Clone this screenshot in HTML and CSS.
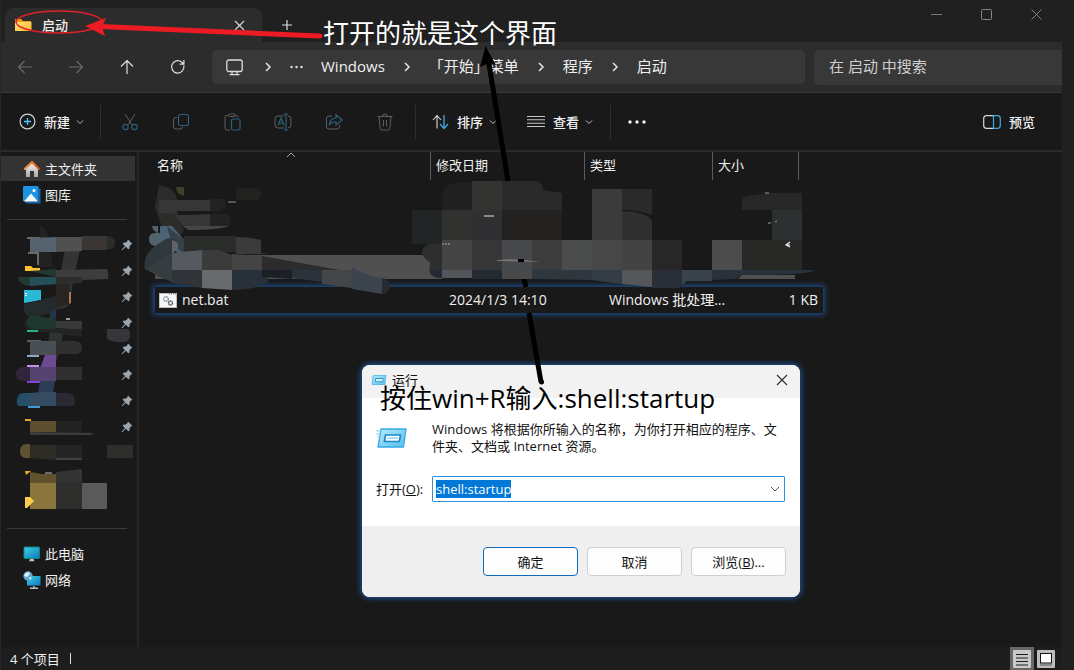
FILE: index.html
```html
<!DOCTYPE html>
<html lang="zh-CN">
<head>
<meta charset="utf-8">
<title>启动</title>
<link rel="stylesheet" href="styles.css">
</head>
<body>
<svg class="defs" width="0" height="0" aria-hidden="true">
  <defs>
    <linearGradient id="g-folder" x1="0" y1="0" x2="1" y2="1"><stop offset="0" stop-color="#ffe27e"/><stop offset="1" stop-color="#fdb92d"/></linearGradient>
    <linearGradient id="g-screen" x1="0" y1="0" x2="1" y2="1"><stop offset="0" stop-color="#37d4e0"/><stop offset="1" stop-color="#1273c4"/></linearGradient>
    <linearGradient id="g-wall" x1="0" y1="0" x2="0" y2="1"><stop offset="0" stop-color="#f2f2f2"/><stop offset="1" stop-color="#a9a9a9"/></linearGradient>
    <linearGradient id="g-roof" x1="0" y1="0" x2="1" y2="0"><stop offset="0" stop-color="#f5a35a"/><stop offset="1" stop-color="#d9520f"/></linearGradient>
    <linearGradient id="g-run" x1="0" y1="0" x2="1" y2="1"><stop offset="0" stop-color="#b5ecfb"/><stop offset="1" stop-color="#55bdee"/></linearGradient>
    <symbol id="chev-r" viewBox="0 0 8 10"><path d="M2 1l4 4-4 4" fill="none" stroke="#e4e4e4" stroke-width="1.500"/></symbol>
    <symbol id="chev-d" viewBox="0 0 8 8"><path d="M1 2.500l3 3 3-3" fill="none" stroke="#bdbdbd" stroke-width="1"/></symbol>
    <symbol id="pin" viewBox="0 0 12 12"><path d="M7 .5L11.500 5 9.800 5.600 8.600 7.200 8.400 9.700 7.300 10.200 4.800 7.800 1.200 11.300.6 10.700 4 7.100 1.700 4.800 2.300 3.700 4.800 3.500 6.300 2.300Z" fill="#9aa7b0"/></symbol>
    <symbol id="run" viewBox="0 0 32 22"><path d="M5 2H30L27.500 20H2Z" fill="url(#g-run)" stroke="#35a9e1" stroke-width="1.300" stroke-linejoin="round"/><path d="M0 4H5M0 7H4M1 10H4" stroke="#7cd0f1"/><path d="M9.500 8H24.500L23.300 14.500H8.500Z" fill="#fff" stroke="#1d86c8" stroke-width="1.700" stroke-linejoin="round"/><path d="M11.500 11H22" stroke="#8fd4f2" stroke-width="1.500"/></symbol>
  </defs>
</svg>

<div class="explorer">
  <header class="titlebar">
    <div class="tab">
      <svg width="17" height="14" viewBox="0 0 17 14"><path d="M0 1H6L8 3H16V7H0Z" fill="#f29c12"/><path d="M0 4H16.500V13H0Z" fill="url(#g-folder)"/></svg>
      <span class="tab-name">启动</span>
      <button class="plain" aria-label="关闭标签页"><svg width="11" height="11" viewBox="0 0 11 11"><path d="M1 1l9 9M10 1l-9 9" stroke="#d4d4d4" stroke-width="1.200"/></svg></button>
    </div>
    <button class="plain add" aria-label="新建标签页"><svg width="12" height="12" viewBox="0 0 12 12"><path d="M6 1v10M1 6h10" stroke="#dcdcdc" stroke-width="1.200"/></svg></button>
    <div class="win-controls">
      <button class="plain" aria-label="最小化"><svg width="11" height="11" viewBox="0 0 11 11"><path d="M0 5.500h11" stroke="#777"/></svg></button>
      <button class="plain" aria-label="最大化"><svg width="11" height="11" viewBox="0 0 11 11"><rect x=".5" y=".5" width="10" height="10" rx="1" fill="none" stroke="#858585"/></svg></button>
      <button class="plain" aria-label="关闭"><svg width="11" height="11" viewBox="0 0 11 11"><path d="M.5.5l10 10M10.500.5l-10 10" stroke="#858585"/></svg></button>
    </div>
  </header>

  <nav class="navbar">
    <div class="nav-buttons">
      <button class="plain" aria-label="后退"><svg width="16" height="16" viewBox="0 0 16 16"><path d="M15 8H2M7.500 2L1.500 8l6 6" fill="none" stroke="#6b6b6b" stroke-width="1.100"/></svg></button>
      <button class="plain" aria-label="前进"><svg width="16" height="16" viewBox="0 0 16 16"><path d="M1 8H14M8.500 2l6 6-6 6" fill="none" stroke="#6b6b6b" stroke-width="1.100"/></svg></button>
      <button class="plain" aria-label="上移"><svg width="16" height="16" viewBox="0 0 16 16"><path d="M8 15V2M2 7.500L8 1.500l6 6" fill="none" stroke="#e0e0e0" stroke-width="1.200"/></svg></button>
      <button class="plain" aria-label="刷新"><svg width="16" height="16" viewBox="0 0 16 16"><path d="M13.800 6.500A6.200 6.200 0 1 1 11.800 3.200L13.800 5M13.900 1v4.200H9.700" fill="none" stroke="#e0e0e0" stroke-width="1.200"/></svg></button>
    </div>
    <div class="address">
      <svg class="pc" width="17" height="17" viewBox="0 0 17 17"><rect x=".8" y="1" width="15.400" height="11.500" rx="2" fill="none" stroke="#ddd" stroke-width="1.300"/><path d="M6 13v2.500M11 13v2.500M3.500 15.700h10" stroke="#ddd" stroke-width="1.200"/></svg>
      <svg width="8" height="10"><use href="#chev-r"/></svg>
      <svg width="13" height="4" viewBox="0 0 13 4"><g fill="#e4e4e4"><circle cx="1.500" cy="2" r="1.200"/><circle cx="6.500" cy="2" r="1.200"/><circle cx="11.500" cy="2" r="1.200"/></g></svg>
      <a href="#">Windows</a>
      <svg width="8" height="10"><use href="#chev-r"/></svg>
      <a href="#">「开始」菜单</a>
      <svg width="8" height="10"><use href="#chev-r"/></svg>
      <a href="#">程序</a>
      <svg width="8" height="10"><use href="#chev-r"/></svg>
      <a href="#">启动</a>
    </div>
    <input class="search" type="text" placeholder="在 启动 中搜索" aria-label="搜索">
  </nav>

  <div class="toolbar">
    <button class="tool new"><svg width="17" height="17" viewBox="0 0 17 17"><circle cx="8.500" cy="8.500" r="7.400" fill="none" stroke="#d0d0d0" stroke-width="1.200"/><path d="M8.500 5v7M5 8.500h7" stroke="#4cc2ff" stroke-width="1.300"/></svg><span>新建</span><svg width="8" height="8"><use href="#chev-d"/></svg></button>
    <i class="sep"></i>
    <div class="icon-tools">
      <button class="plain" aria-label="剪切"><svg width="18" height="18" viewBox="0 0 18 18" fill="none"><path d="M4 1l7.500 11.500M14 1L6.500 12.500" stroke="#5f5f5f"/><circle cx="4.500" cy="14" r="2.700" stroke="#2d5f7c" stroke-width="1.200"/><circle cx="13.500" cy="14" r="2.700" stroke="#2d5f7c" stroke-width="1.200"/></svg></button>
      <button class="plain" aria-label="复制"><svg width="18" height="18" viewBox="0 0 18 18" fill="none"><path d="M5 4.500H4Q1.500 4.500 1.500 7v6.500Q1.500 16 4 16h4Q10.500 16 10.500 13.500" stroke="#5f5f5f"/><rect x="6.500" y="1.500" width="10" height="11" rx="2" stroke="#2d5f7c" stroke-width="1.200"/></svg></button>
      <button class="plain" aria-label="粘贴"><svg width="18" height="18" viewBox="0 0 18 18" fill="none"><path d="M5.500 2.500H4Q2 2.500 2 4.500v11Q2 17 4 17h3M12 2.500h1q2 0 2 2" stroke="#5f5f5f"/><rect x="5.500" y="1" width="6.500" height="2.500" rx="1" stroke="#5f5f5f"/><rect x="8.500" y="6" width="8.500" height="11" rx="1.500" stroke="#2d5f7c" stroke-width="1.200"/></svg></button>
      <button class="plain" aria-label="重命名"><svg width="18" height="18" viewBox="0 0 18 18" fill="none"><path d="M10 3H4Q1 3 1 6v6q0 3 3 3h6M14 3q3 0 3 3v6q0 3-3 3" stroke="#5f5f5f"/><path d="M4 12.500l3-7.500 3 7.500M5 10h4M12 1v16M10 1h4M10 17h4" stroke="#2d5f7c" stroke-width="1.200"/></svg></button>
      <button class="plain" aria-label="共享"><svg width="18" height="18" viewBox="0 0 18 18" fill="none"><path d="M7 3H4Q1.500 3 1.500 5.500v8Q1.500 16 4 16h8q2.500 0 2.500-2.500V12" stroke="#5f5f5f"/><path d="M11 1.800L17 7l-6 5V9Q7 8.500 4.500 11.500 5 5.500 11 5Z" stroke="#2d5f7c" stroke-width="1.200"/></svg></button>
      <button class="plain" aria-label="删除"><svg width="18" height="18" viewBox="0 0 18 18" fill="none"><path d="M1.500 3.500h15M6.500 3.500Q6.500 1 9 1t2.500 2.500M3 3.500l1.200 12Q4.400 17 6 17h6q1.600 0 1.800-1.500l1.200-12M7.500 7v6.500M10.500 7v6.500" stroke="#5f5f5f"/></svg></button>
    </div>
    <i class="sep"></i>
    <button class="tool sort"><svg width="17" height="16" viewBox="0 0 17 16" fill="none"><path d="M5 14.500V2M1 6l4-4.500L9 6" stroke="#ddd" stroke-width="1.100"/><path d="M12 1v13M8 10l4 4.500 4-4.500" stroke="#3fa9e5" stroke-width="1.300"/></svg><span>排序</span><svg width="8" height="8"><use href="#chev-d"/></svg></button>
    <button class="tool view"><svg width="18" height="13" viewBox="0 0 18 13"><path d="M0 1.500h18M0 4.800h18M0 8.200h18M0 11.500h18" stroke="#c4c4c4" stroke-width="1.100"/></svg><span>查看</span><svg width="8" height="8"><use href="#chev-d"/></svg></button>
    <i class="sep"></i>
    <button class="plain more" aria-label="更多"><svg width="18" height="4" viewBox="0 0 18 4"><g fill="#f2f2f2"><circle cx="2" cy="2" r="1.700"/><circle cx="9" cy="2" r="1.700"/><circle cx="16" cy="2" r="1.700"/></g></svg></button>
    <button class="tool preview"><svg width="18" height="14" viewBox="0 0 18 14" fill="none"><path d="M10 .7H3.500Q.7.700.7 3.500v7q0 2.800 2.800 2.800H10" stroke="#d8d8d8" stroke-width="1.200"/><path d="M10.500.7h4q2.800 0 2.800 2.800v7q0 2.800-2.800 2.800h-4Z" stroke="#3fa9e5" stroke-width="1.200"/></svg><span>预览</span></button>
  </div>

  <div class="body">
    <aside class="sidebar">
      <a class="side-item current" href="#"><svg width="18" height="18" viewBox="0 0 18 18"><path d="M3 8L9 3l6 5v9h-4v-6H7v6H3Z" fill="url(#g-wall)"/><path d="M1.300 9.500L9 2l7.700 7.500" fill="none" stroke="url(#g-roof)" stroke-width="2.200" stroke-linejoin="round"/></svg><span>主文件夹</span></a>
      <a class="side-item" href="#"><svg width="18" height="18" viewBox="0 0 18 18"><path d="M3 16H15.500V2.500H17.500V17.500H3Z" fill="#1c62ae"/><rect width="15.500" height="15.500" rx="1.200" fill="#1e93e4"/><path d="M1 15.500l7-8 7 8Z" fill="#f4fbff"/><circle cx="11" cy="4.500" r="1.500" fill="#fff"/></svg><span>图库</span></a>
      <hr>
      <ul class="pins">
        <li><svg width="12" height="12"><use href="#pin"/></svg></li>
        <li><svg width="12" height="12"><use href="#pin"/></svg></li>
        <li><svg width="12" height="12"><use href="#pin"/></svg></li>
        <li><svg width="12" height="12"><use href="#pin"/></svg></li>
        <li><svg width="12" height="12"><use href="#pin"/></svg></li>
        <li><svg width="12" height="12"><use href="#pin"/></svg></li>
        <li><svg width="12" height="12"><use href="#pin"/></svg></li>
        <li><svg width="12" height="12"><use href="#pin"/></svg></li>
      </ul>
      <svg class="smudge-side" width="136" height="300" viewBox="1 220 136 300" aria-hidden="true">
        <path d="M40 225q6 2 8 12l5 30H38Z" fill="#222"/>
        <path d="M65 250H80L73 280 70 303q-2 6-14 6V290L61 270Z" fill="#333534"/>
        <path d="M56 284h14v20l-14 4Z" fill="#292522"/><path d="M69 292h2v11l-2 1Z" fill="#aa7554"/>
        <path d="M27 238h13M28 253h10v12" fill="none" stroke="#7d858a" stroke-width="1.500"/>
        <path d="M30 238L56 237V252H30Z" fill="#56626d"/><path d="M56 237H82V251L56 252Z" fill="#505050"/><path d="M82 236H107V250H82Z" fill="#3a3634"/><path d="M107 236q8 0 8 7t-8 6Z" fill="#2b2d2d"/>
        <path d="M25 266h6l2 2h7v3H25Z" fill="#ffc22d"/><path d="M56 270l51-1q2 4 1 10l-52 2Z" fill="#3d3d3d"/><path d="M30 271l26-2v8H18q1 8 12 9l26-2V277Z" fill="#263832"/><path d="M30 277h26v7l-26 2Z" fill="#265059"/><path d="M56 277H82v6l-26 1Z" fill="#2d2d2d"/>
        <path d="M24 290H41V300L24 303Z" fill="#2bb9d8"/><path d="M26 293v1M26 295v1" stroke="#fff" stroke-width="2"/><path d="M24 304L56 296V312L34 317q-12 0-10-13Z" fill="#252b2d"/>
        <path d="M50 312L56 310V320L50 325Z" fill="#213549"/><path d="M66 319h4M44 319h7" stroke="#a29b91" stroke-width="2"/>
        <path d="M56 321H82V330L56 328Z" fill="#373838"/><path d="M35 317q-12 0-10 8 1 6 10 6L82 337V329H56V319Z" fill="#232525"/><path d="M30 316h10L56 320V329H32q-9-6-2-13Z" fill="#1e372f"/><path d="M27 331h11" stroke="#23ba7a" stroke-width="2"/>
        <path d="M107 329h20q3 0 3 6t-5 7q-10 1-18-3Z" fill="#343639"/>
        <path d="M50 332l13 2-4 20-6 16H43Z" fill="#313232"/><path d="M27 341H41" stroke="#99a6ad"/><path d="M30 341H56V355H30Z" fill="#4a4f54"/><path d="M56 341H74q8 0 8 7t-8 6H56Z" fill="#303030"/><path d="M27 356h12" stroke="#8fa8bf" stroke-width="2"/>
        <path d="M45 355H56V368H40Z" fill="#6d4a92"/><path d="M27 366h12" stroke="#c094e2" stroke-width="2"/><path d="M30 367v14H22q-6-1-6-7t7-7Z" fill="#30263b"/><path d="M30 367H56V381H30Z" fill="#56436f"/><path d="M56 367H82V380H56Z" fill="#303030"/><path d="M27 382h13" stroke="#8144d5" stroke-width="2"/>
        <path d="M40 381H55L53 393H38Z" fill="#2d3d58"/><path d="M30 393V406H19q-3-1-2-7t7-6Z" fill="#254f68"/><path d="M30 393l12-1h14V406H30Z" fill="#344b62"/><path d="M56 393H69q8 2 5 13H56Z" fill="#2a2a32"/><path d="M28 407h12" stroke="#4698d7" stroke-width="2"/>
        <path d="M25 420h6" stroke="#e6a822" stroke-width="2"/><path d="M30 421H56V432H30Z" fill="#5c5031"/><path d="M56 421H82V434H56Z" fill="#222"/><path d="M30 432l64 1-3 2H30Z" fill="#3b3b3b"/>
        <path d="M30 444v14H25q-5-1-5-7t6-7Z" fill="#5e5231"/><path d="M30 445H56V460L30 458Z" fill="#2d2c27"/><path d="M56 445H82V459H56Z" fill="#252525"/><path d="M56 459H82" stroke="#404040" stroke-width="2"/><path d="M107 445h26v13H107Z" fill="#2d2d2b"/>
        <path d="M25 471h6l-5 4Z" fill="#f2af22"/><path d="M30 472l12 2h14v10H30Z" fill="#5f522d"/><path d="M45 473h7" stroke="#b8bdc0"/><path d="M56 472L82 469V484H56Z" fill="#343434"/><path d="M30 483H56V509H30Z" fill="#8a753c"/><path d="M56 482H82V509H56Z" fill="#2e2e2d"/><path d="M82 483H107V509H82Z" fill="#5a5a5a"/><path d="M25 497h5l4 4-7 7h-2Z" fill="#ffcb4f"/>
      </svg>
      <hr class="lower">
      <a class="side-item" href="#"><svg width="18" height="16" viewBox="0 0 18 16"><rect x="1" y="1" width="15.500" height="11.500" rx=".7" fill="url(#g-screen)" stroke="#187"/><path d="M7 13h3.500l1 2.200H6Z" fill="#b8c3cc"/></svg><span>此电脑</span></a>
      <a class="side-item" href="#"><svg width="18" height="18" viewBox="0 0 18 18"><rect x="4" y="5" width="13.500" height="9.500" fill="url(#g-screen)"/><path d="M7 17.200h8M11 15v2" stroke="#b8c3cc" stroke-width="1.400"/><circle cx="5" cy="5" r="4.700" fill="#5aa7cf"/><path d="M2 2.500L5.500 1 7 3 4 6 1 5ZM6 6l3 .5-2 2.500Z" fill="#dfeff8"/></svg><span>网络</span></a>
    </aside>

    <main class="files">
      <svg class="sort-mark" width="10" height="6" viewBox="0 0 10 6"><path d="M1 5l4-4 4 4" fill="none" stroke="#a5a5a5"/></svg>
      <table>
        <colgroup><col><col class="c-date"><col class="c-type"><col class="c-size"><col class="c-end"></colgroup>
        <thead><tr><th>名称</th><th>修改日期</th><th>类型</th><th>大小</th><th></th></tr></thead>
        <tbody>
          <tr class="hidden-rows"><td colspan="5">
            <svg class="smudge" width="690" height="120" viewBox="140 180 690 120" aria-hidden="true">
              <path d="M155 255H442V279H155Z" fill="#505050"/>
              <path d="M159 185q15 2 18 14v16q4 10 7 15l-8 12-14-15-7-20Z" fill="#2c2d2b"/><path d="M176 187h8v9q-8-2-8-9Z" fill="#3d4128"/>
              <path d="M236 188h18q7 0 7 6t-5 6H236Z" fill="#222320"/><path d="M228 201h8v2h-8Z" fill="#555"/>
              <path d="M159 200H210V211H176l2 4q12 0 32-1v12l-26 2-10-15H159Z" fill="#363636"/><path d="M210 199h14q6 6-3 12h-11ZM210 214h16q7 3 4 12H210Z" fill="#222"/>
              <path d="M184 226h45q-10 4-41 4Z" fill="#454545"/>
              <path d="M160 226h12l12 14v18l-10-8-14-9Z" fill="#4a6375"/><path d="M152 226h6v6q-5 0-6-6M155 233q4-2 6 2v10l-6 1q-6-1-6-7t6-6Z" fill="#53636d"/><path d="M167 226l17 14v12q-12-2-17-26Z" fill="#354047"/>
              <path d="M184 236H236V252H184Z" fill="#2a2c2a"/><path d="M236 237q14 0 25 3v13l9 1H236Z" fill="#3b3b3b"/>
              <path d="M166 239q8-3 11 3 2 7-5 12l-27 16q-3-14 10-24Z" fill="#2f383c"/><path d="M172 240q7 1 6 8l-6 6Z" fill="#606467"/>
              <path d="M145 269L172 253V282L158 276Z" fill="#343d3f"/><path d="M172 253l30-3v20H172Z" fill="#565a5e"/><path d="M202 250h16q8 2 14 5v15H202Z" fill="#3b3b3b"/><path d="M232 254l30 2v14H232Z" fill="#444"/><path d="M262 256L345 271 387 280 380 290 345 286 262 270Z" fill="#2c2c2c"/>
              <path d="M172 270H202V288L172 283Z" fill="#303439"/><path d="M202 270H232V290L202 288Z" fill="#68696b"/><path d="M232 270h36v12q-12 8-36 8Z" fill="#28303a"/><path d="M262 270H292V279l-30-2Z" fill="#1b2026"/>
              <path d="M292 270H322V282L292 278Z" fill="#2a323b"/><path d="M322 270H352V288L322 284Z" fill="#444549"/><path d="M352 267q12 8 30 11V294L352 289Z" fill="#3c444d"/><path d="M382 278q9 1 8 9-1 6-8 7Z" fill="#252b33"/>
              <path d="M412 210H442V244H412Z" fill="#222525"/><path d="M442 210V192q2-10 30-10V210Z" fill="#202020"/><path d="M442 210H472V240H442Z" fill="#31312f"/><path d="M472 181H502V210H472Z" fill="#333331"/><path d="M502 181h34q7 1 7 9l19 3v17H502Z" fill="#2a2a2b"/><path d="M472 210H502V240H472Z" fill="#303032"/><path d="M502 210H562V240H502Z" fill="#242220"/><path d="M484 216h10" stroke="#aaa" stroke-width="1.500"/>
              <path d="M442 244h-12q-9 2-8 10 2 5 8 8-3 16 12 16Z" fill="#2d2e2e"/><path d="M442 240H472V270H442Z" fill="#444"/><path d="M472 240H502V270H472Z" fill="#363637"/><path d="M502 240H532V270H502Z" fill="#46484b"/><path d="M532 240H562V270H532Z" fill="#3c3c3c"/><path d="M562 240H592V270H562Z" fill="#4a4d4c"/><path d="M592 240H622V270H592Z" fill="#474747"/><path d="M622 240H652V270H622Z" fill="#434343"/><path d="M652 240H682V270H652Z" fill="#272727"/>
              <path d="M442 244h9" stroke="#aaa" stroke-dasharray="2 1"/><path d="M497 260q20-2 43 2l-43-1Z" fill="#727574"/><path d="M518 259h6v3h-6Z" fill="#000"/>
              <path d="M592 189H622V240H592Z" fill="#3b3b3b"/><path d="M622 189H652V215q-12-5-30-5Z" fill="#2a2a2b"/><path d="M622 211q26 1 30 10v19H622Z" fill="#303031"/>
              <path d="M742 197l26-4h34v17H742Z" fill="#272728"/><path d="M772 210H802V240H772Z" fill="#2d3030"/><path d="M712 240H742V270H712Z" fill="#4c4c4c"/><path d="M742 240H802V270H742Z" fill="#282827"/><path d="M765 193h4M768 223h3M775 222l2-1" stroke="#999"/><path d="M790 242l-4 3 4 2M787 245h3" fill="none" stroke="#eee" stroke-width="1.200"/>
              <path d="M429 270H442V278q-11 1-13-8M472 270H502V279H472Z" fill="#242a32"/><path d="M442 270H472V278H442Z" fill="#52565a"/><path d="M502 270H532V279H502Z" fill="#48494a"/><path d="M532 270H592V280L532 279Z" fill="#2e363e"/><path d="M592 270H622V284L592 280Z" fill="#343c45"/><path d="M622 270H652V287L622 284Z" fill="#555659"/><path d="M652 270H682v17l-5 1H652Z" fill="#292e37"/><path d="M682 270H712V281H687l-5 4Z" fill="#3a434b"/><path d="M712 270H815q-4 5-73 5l-6 4-24 1Z" fill="#29313a"/><path d="M742 275h53v4h-57Z" fill="#505050"/>
            </svg>
          </td></tr>
          <tr class="file">
            <td><span class="file-name"><svg width="18" height="15" viewBox="0 0 18 15"><rect x=".5" y=".5" width="17" height="14" fill="#f7f7f7" stroke="#bcbcbc"/><path d="M10 1h7" stroke="#777" stroke-dasharray="1 1"/><circle cx="7" cy="6" r="2.300" fill="none" stroke="#8a9aa4" stroke-width="1.500" stroke-dasharray="1.500 .5"/><circle cx="11.500" cy="10" r="2" fill="none" stroke="#4c555b" stroke-width="1.500" stroke-dasharray="1.500 .4"/></svg>net.bat</span></td>
            <td>2024/1/3 14:10</td><td>Windows 批处理...</td><td colspan="2">1 KB</td>
          </tr>
        </tbody>
      </table>
    </main>
  </div>

  <footer class="status">
    <span>4 个项目</span><i class="bar"></i>
    <div class="views">
      <button class="view-mode on" aria-label="详细信息"><svg width="18" height="18" viewBox="0 0 18 18"><rect width="18" height="18" rx="1" fill="#c9c9c9"/><path d="M3 4.500h12M3 8h12M3 11.500h12M3 15h12" stroke="#1c1c1c"/></svg></button>
      <button class="view-mode" aria-label="大图标"><svg width="18" height="18" viewBox="0 0 18 18"><rect width="18" height="18" rx="1" fill="#bdbdbd"/><rect x="3.500" y="3.500" width="11" height="9.500" fill="#fff" stroke="#111"/><path d="M3 15h12" stroke="#555"/></svg></button>
    </div>
  </footer>
</div>

<section class="dialog" role="dialog" aria-labelledby="run-title">
  <div class="dialog-title"><svg width="16" height="12"><use href="#run"/></svg><span id="run-title">运行</span><button class="plain" aria-label="关闭"><svg width="12" height="12" viewBox="0 0 12 12"><path d="M1 1l10 10M11 1L1 11" stroke="#333" stroke-width="1.200"/></svg></button></div>
  <div class="dialog-body">
    <div class="message"><svg width="32" height="22"><use href="#run"/></svg><p>Windows 将根据你所输入的名称，为你打开相应的程序、文件夹、文档或 Internet 资源。</p></div>
    <div class="field"><label for="cmd">打开(<u>O</u>):</label><div class="combo"><input id="cmd" type="text" value="shell:startup"><svg width="10" height="6" viewBox="0 0 10 6"><path d="M1 1l4 4 4-4" fill="none" stroke="#555"/></svg></div></div>
  </div>
  <div class="dialog-actions"><button class="btn primary">确定</button><button class="btn">取消</button><button class="btn">浏览(<u>B</u>)...</button></div>
</section>

<svg class="marks" width="560" height="400" viewBox="0 0 560 400" aria-hidden="true">
  <ellipse cx="59" cy="22" rx="43" ry="11" fill="none" stroke="#e0202a" stroke-width="1.500"/>
  <path d="M100 26.500L320 36" stroke="#ed1c24" stroke-width="5" stroke-linecap="round"/>
  <path d="M85 26L106 18 102 27 105 36Z" fill="#ed1c24"/>
  <path d="M488 58L508 181M524 279L526 287M529 313L541 382" stroke="#000" stroke-width="5"/>
  <circle cx="541.500" cy="382" r="2.500"/>
  <path d="M485.500 46L496 65 488.500 63 480 67Z"/>
</svg>
<p class="note note-top">打开的就是这个界面</p>
<p class="note note-run">按住win+R输入:shell:startup</p>
<script src="app.js"></script>
</body>
</html>
```
FILE: styles.css
```css
* { box-sizing: border-box; }
body {
  margin: 0;
  background: #202020;
  color: #f0f0f0;
  font: 13px/18px "Open Sans", "Noto Sans CJK SC", sans-serif;
  position: relative;
  overflow: hidden;
}
svg { display: block; flex: none; }
a { color: inherit; text-decoration: none; }
button, input { font: inherit; color: inherit; }
.defs { position: absolute; }
.plain { display: grid; place-items: center; border: 0; padding: 0; background: none; }

.explorer {
  display: flex;
  flex-direction: column;
  min-height: 100vh;
  margin-right: 12px;
  border-left: 1px solid #262626;
}
.titlebar { display: flex; align-items: flex-start; padding-left: 4px; height: 42px; }
.tab {
  display: flex;
  align-items: center;
  width: 257px;
  height: 34px;
  margin-top: 8px;
  padding: 0 17px 0 10px;
  border-radius: 8px 8px 0 0;
  background: #2c2c2c;
}
.tab-name { flex: 1; margin-left: 10px; font-weight: 500; }
.add { width: 30px; height: 34px; margin: 8px 0 0 10px; }
.win-controls { display: flex; margin: 4px 6px 0 auto; }
.win-controls button { width: 40px; height: 20px; margin-left: 10px; }

.navbar {
  display: flex;
  align-items: center;
  height: 51px;
  background: #2c2c2c;
  border-bottom: 1px solid #3a3a3a;
  font-size: 15px;
}
.nav-buttons { display: flex; gap: 20px; padding-left: 8px; }
.nav-buttons button { width: 31px; height: 32px; }
.address {
  display: flex;
  align-items: center;
  gap: 18px;
  flex: 1;
  height: 34px;
  margin: 0 9px 0 19px;
  padding-left: 14px;
  border-radius: 5px;
  background: #383838;
  line-height: 16px;
}
.address a { padding-bottom: 2px; }
.address .pc { margin-right: 3px; }
.search {
  width: 248px;
  height: 35px;
  padding: 0 15px 2px;
  border: 0;
  border-radius: 5px 0 0 5px;
  background: #383838;
}
.search::placeholder { color: #cfcfcf; opacity: 1; }

.toolbar {
  display: flex;
  align-items: center;
  height: 59px;
  border-bottom: 2px solid #2b2b2b;
  background: #191919;
}
.tool { display: flex; align-items: center; gap: 8px; padding: 0; border: 0; background: none; font-weight: 500; }
.tool svg + span + svg { margin-left: -2px; }
.new { margin: 0 16px 0 18px; }
.sep { width: 1px; height: 34px; background: #2e2e2e; }
.icon-tools { display: flex; margin: 0 5px 0 3px; }
.icon-tools button { width: 51px; height: 32px; }
.sort { margin: 0 30px 0 16px; }
.view { margin-right: 17px; }
.more { margin-left: 17px; }
.preview { margin: 0 27px 0 auto; }

.body { display: flex; flex: 1; background: #191919; }
.sidebar { position: relative; width: 138px; padding-top: 4px; border-right: 2px solid #262626; }
.side-item { display: flex; align-items: center; gap: 4px; height: 25px; margin: 0 2px 1px 0; padding-left: 22px; }
.current { background: #333; }
.sidebar hr { height: 1px; margin: 12px 10px 12px 6px; border: 0; background: #3a3a3a; }
.sidebar .lower { margin-top: 88px; }
.pins { margin: 0; padding: 0; list-style: none; }
.pins li { display: flex; align-items: center; justify-content: flex-end; height: 26px; padding-right: 4px; }
.smudge-side { position: absolute; top: 68px; left: 0; }

.files { position: relative; flex: 1; padding-left: 16px; }
.sort-mark { position: absolute; top: 0; left: 147px; }
table { width: 668px; table-layout: fixed; border-spacing: 0; white-space: nowrap; }
.c-date { width: 154px; }
.c-type { width: 128px; }
.c-size { width: 86px; }
.c-end { width: 25px; }
th { height: 28px; padding: 0 0 2px 5px; border-left: 1px solid #5c5c5c; text-align: left; font-weight: 400; }
th:first-child { padding-left: 2px; border-left: 0; }
td { padding: 0; }
.hidden-rows td { position: relative; height: 107px; }
.smudge { position: absolute; top: 0; left: -15px; z-index: 1; }
.file { background: #191919; box-shadow: 0 0 5px 2px #1d4b82; font-size: 14px; }
.file td { height: 26px; padding-left: 19px; }
.file td:first-child { padding-left: 4px; }
.file td:nth-child(3) { padding-left: 25px; }
.file td:last-child { padding-right: 5px; text-align: right; }
.file-name { display: flex; align-items: center; gap: 5px; }

.status { display: flex; align-items: center; height: 23px; padding-left: 9px; background: #1d1d1d; }
.bar { width: 1px; height: 11px; margin-left: 10px; background: #ddd; }
.views { display: flex; margin: 0 4px 0 auto; }
.view-mode { display: grid; place-items: center; width: 24px; height: 23px; padding: 0; border: 0; background: none; }
.view-mode.on { background: #686868; }

.dialog {
  position: absolute;
  top: 365px;
  left: 362px;
  width: 438px;
  border-radius: 8px;
  overflow: hidden;
  background: #fff;
  box-shadow: 0 0 5px 2px #1d4b82;
  color: #111;
}
.dialog-title { display: flex; align-items: center; gap: 5px; height: 33px; padding: 0 12px 3px 9px; background: #f2f2f2; }
.dialog-title .plain { margin-left: auto; }
.dialog-body { padding: 23px 15px 24px 14px; }
.message { display: flex; align-items: center; gap: 24px; }
.message p { flex: 1; margin: 0; line-height: 17px; }
.field { display: flex; align-items: center; margin-top: 21px; }
.field label { width: 56px; }
.combo { display: flex; align-items: center; flex: 1; height: 26px; padding: 0 4px 0 3px; border: 1px solid #2f8fdb; border-radius: 1px; }
.combo input { flex: 1; min-width: 0; padding: 0; border: 0; outline: 0; background: none; line-height: 18px; }
.combo input::selection { background: #0078d7; color: #fff; }
.dialog-actions { display: flex; justify-content: flex-end; gap: 9px; padding: 21px 14px; background: #efefef; }
.btn { width: 95px; height: 29px; padding: 0; border: 1px solid #cfcfcf; border-radius: 4px; background: #fdfdfd; }
.primary { border-color: #0f6cbd; }

.marks { position: absolute; top: 0; left: 0; pointer-events: none; }
.note { position: absolute; margin: 0; font-size: 26px; line-height: 32px; white-space: nowrap; }
.note-top { top: 17px; left: 323px; color: #fff; }
.note-run { top: 382px; left: 380px; color: #000; }
```
FILE: app.js
```js
document.getElementById('cmd').select();
```
